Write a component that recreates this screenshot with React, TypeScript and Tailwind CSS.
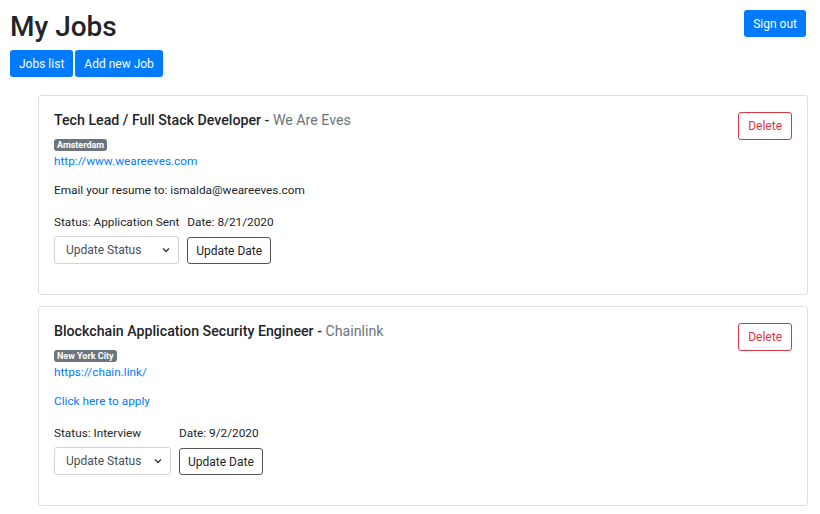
import React from "react";

const font = { fontFamily: 'Roboto, "Liberation Sans", Arial, sans-serif' };

function Card(props: {
  title: string;
  company: string;
  city: string;
  url: string;
  note: React.ReactNode;
  status: string;
  date: string;
}) {
  return (
    <div className="border border-[#dfdfdf] rounded-[3px] bg-white px-[15px] pt-[15px] pb-[30px] flex justify-between">
      <div className="flex flex-col">
        <div className="text-[14.2px] leading-[18px] text-[#212529] font-medium">
          {props.title} - <span className="text-[#6c757d] font-normal">{props.company}</span>
        </div>
        <div className="mt-[10px] flex">
          <span className="bg-[#6c757d] text-white text-[9px] leading-[12px] font-bold px-[3px] rounded-[3px]">
            {props.city}
          </span>
        </div>
        <a className="text-[#007bff] text-[11.8px] leading-[16px] mt-[2px]">{props.url}</a>
        <div className="mt-[13px] text-[11.8px] leading-[16px]">{props.note}</div>
        <div className="mt-[16px] inline-grid grid-cols-[auto_auto] gap-x-[8px] w-max text-[11.8px] text-[#212529]">
          <div className="leading-[16px]">Status: {props.status}</div>
          <div className="leading-[16px]">Date: {props.date}</div>
          <div className="mt-[6px] h-[28px] border border-[#ced4da] rounded-[3px] flex items-center justify-between pl-[11px] pr-[8px] min-w-[117px] text-[#495057] text-[12px]">
            <span>Update Status</span>
            <svg width="8" height="6" viewBox="0 0 8 6" className="ml-[8px]">
              <path d="M1 1.5 L4 4.5 L7 1.5" stroke="#333" strokeWidth="1.3" fill="none" />
            </svg>
          </div>
          <div className="mt-[7px] flex">
            <div className="h-[27px] border border-[#555] rounded-[3px] flex items-center px-[8px] text-[#212529] text-[12px]">
              Update Date
            </div>
          </div>
        </div>
      </div>
      <div className="pt-[1px]">
        <div className="h-[28px] border border-[#dc3545] rounded-[3px] text-[#dc3545] text-[12px] flex items-center px-[9px]">
          Delete
        </div>
      </div>
    </div>
  );
}

export default function App() {
  return (
    <div style={font} className="w-[820px] h-[514px] overflow-hidden bg-white text-[#212529]">
      <div className="flex justify-between px-[10px] pt-[10px]">
        <div>
          <h1 className="text-[28px] leading-[34px] font-medium text-[#212529]">My Jobs</h1>
          <div className="flex gap-[2px] mt-[6px]">
            <button className="bg-[#007bff] text-white text-[12px] h-[27px] px-[9px] rounded-[3px]">Jobs list</button>
            <button className="bg-[#007bff] text-white text-[12px] h-[27px] px-[9px] rounded-[3px]">Add new Job</button>
          </div>
        </div>
        <div className="pr-[4px]">
          <button className="bg-[#007bff] text-white text-[12px] h-[27px] px-[9px] rounded-[3px]">Sign out</button>
        </div>
      </div>
      <div className="pl-[38px] pr-[12px] mt-[18px] flex flex-col gap-[11px]">
        <Card
          title="Tech Lead / Full Stack Developer"
          company="We Are Eves"
          city="Amsterdam"
          url="http://www.weareeves.com"
          note={<span>Email your resume to: ismalda@weareeves.com</span>}
          status="Application Sent"
          date="8/21/2020"
        />
        <Card
          title="Blockchain Application Security Engineer"
          company="Chainlink"
          city="New York City"
          url="https://chain.link/"
          note={<a className="text-[#007bff]">Click here to apply</a>}
          status="Interview"
          date="9/2/2020"
        />
      </div>
    </div>
  );
}
